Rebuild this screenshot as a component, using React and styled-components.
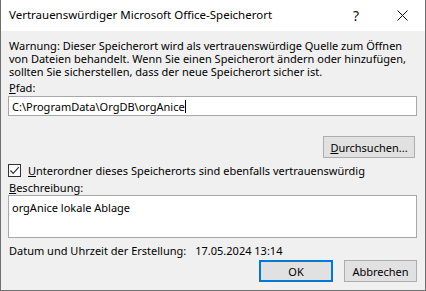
import React from "react";
import styled, { createGlobalStyle } from "styled-components";

const Global = createGlobalStyle`
  html, body { margin: 0; padding: 0; background: #ffffff; }
  body { font-family: "Noto Sans", "Open Sans", sans-serif; font-size: 11px; color: #000; }
  * { box-sizing: border-box; }
`;

const Window = styled.div`
  width: 426px;
  height: 291px;
  display: flex;
  flex-direction: column;
  border: 1px solid #6f6f6f;
  border-top: none;
  background: #f0f0f0;
`;

const TitleBar = styled.div`
  height: 31px;
  flex: none;
  background: #ffffff;
  display: flex;
  align-items: center;
  padding-left: 8px;
  font-size: 11.5px;
`;

const TitleText = styled.div`
  flex: 1;
  padding-bottom: 2px;
`;

const TitleButton = styled.div`
  width: 46px;
  height: 30px;
  display: flex;
  align-items: center;
  justify-content: center;
  font-size: 14px;
  color: #111;
`;

const Body = styled.div`
  flex: 1;
  display: flex;
  flex-direction: column;
  padding: 8px 8px 0 7px;
`;

const Warning = styled.p`
  margin: 0 0 0 1px;
  line-height: 13px;
`;

const Label = styled.div`
  margin: ${(p) => p.$m || "0"};
  padding-left: 1px;
  line-height: 13px;
`;

const Input = styled.div`
  height: 20px;
  background: #fff;
  border: 1px solid #a8a8a8;
  display: flex;
  align-items: center;
  padding-left: 3px;
  margin-top: 2px;
`;

const Caret = styled.span`
  display: inline-block;
  width: 1px;
  height: 13px;
  background: #000;
`;

const BrowseRow = styled.div`
  display: flex;
  justify-content: flex-end;
  margin-top: 20px;
  padding-right: 2px;
`;

const Button = styled.div`
  height: 22px;
  width: ${(p) => p.$w}px;
  display: flex;
  align-items: center;
  justify-content: center;
  background: #e1e1e1;
  border: ${(p) => (p.$default ? "2px solid #0078d7" : "1px solid #adadad")};
`;

const CheckRow = styled.div`
  display: flex;
  align-items: center;
  gap: 7px;
  margin-top: 5px;
  height: 14px;
`;

const Box = styled.div`
  width: 13px;
  height: 13px;
  border: 1px solid #333;
  background: #fff;
  display: flex;
  align-items: center;
  justify-content: center;
`;

const TextArea = styled.div`
  height: 43px;
  background: #fff;
  border: 1px solid #a8a8a8;
  padding: 4px 3px;
  margin-top: 1px;
`;

const InfoRow = styled.div`
  display: flex;
  margin-top: 6px;
  padding-left: 1px;
  line-height: 13px;
`;

const InfoValue = styled.span`
  margin-left: 9px;
`;

const Footer = styled.div`
  display: flex;
  justify-content: flex-end;
  gap: 11px;
  margin-top: 3px;
  padding-right: 0px;
`;

export default function App() {
  return (
    <>
      <Global />
      <Window>
        <TitleBar>
          <TitleText>Vertrauenswürdiger Microsoft Office-Speicherort</TitleText>
          <TitleButton>?</TitleButton>
          <TitleButton>
            <svg width="11" height="11" viewBox="0 0 11 11">
              <path d="M0.5 0.5 L10.5 10.5 M10.5 0.5 L0.5 10.5" stroke="#111" strokeWidth="1" fill="none" />
            </svg>
          </TitleButton>
        </TitleBar>
        <Body>
          <Warning>
            Warnung: Dieser Speicherort wird als vertrauenswürdige Quelle zum Öffnen von Dateien
            behandelt. Wenn Sie einen Speicherort ändern oder hinzufügen, sollten Sie sicherstellen,
            dass der neue Speicherort sicher ist.
          </Warning>
          <Label $m="3px 0 0 0">
            <u>P</u>fad:
          </Label>
          <Input>
            C:\ProgramData\OrgDB\orgAnice
            <Caret />
          </Input>
          <BrowseRow>
            <Button $w={92}>
              <span>
                <u>D</u>urchsuchen...
              </span>
            </Button>
          </BrowseRow>
          <CheckRow>
            <Box>
              <svg width="11" height="11" viewBox="0 0 11 11">
                <path d="M1.5 5.5 L4.2 8.3 L9.8 2.2" stroke="#333" strokeWidth="1.2" fill="none" />
              </svg>
            </Box>
            <span>
              <u>U</u>nterordner dieses Speicherorts sind ebenfalls vertrauenswürdig
            </span>
          </CheckRow>
          <Label $m="4px 0 0 0">
            <u>B</u>eschreibung:
          </Label>
          <TextArea>orgAnice lokale Ablage</TextArea>
          <InfoRow>
            <span>Datum und Uhrzeit der Erstellung:</span>
            <InfoValue>17.05.2024 13:14</InfoValue>
          </InfoRow>
          <Footer>
            <Button $w={74} $default>
              OK
            </Button>
            <Button $w={73}>Abbrechen</Button>
          </Footer>
        </Body>
      </Window>
    </>
  );
}
